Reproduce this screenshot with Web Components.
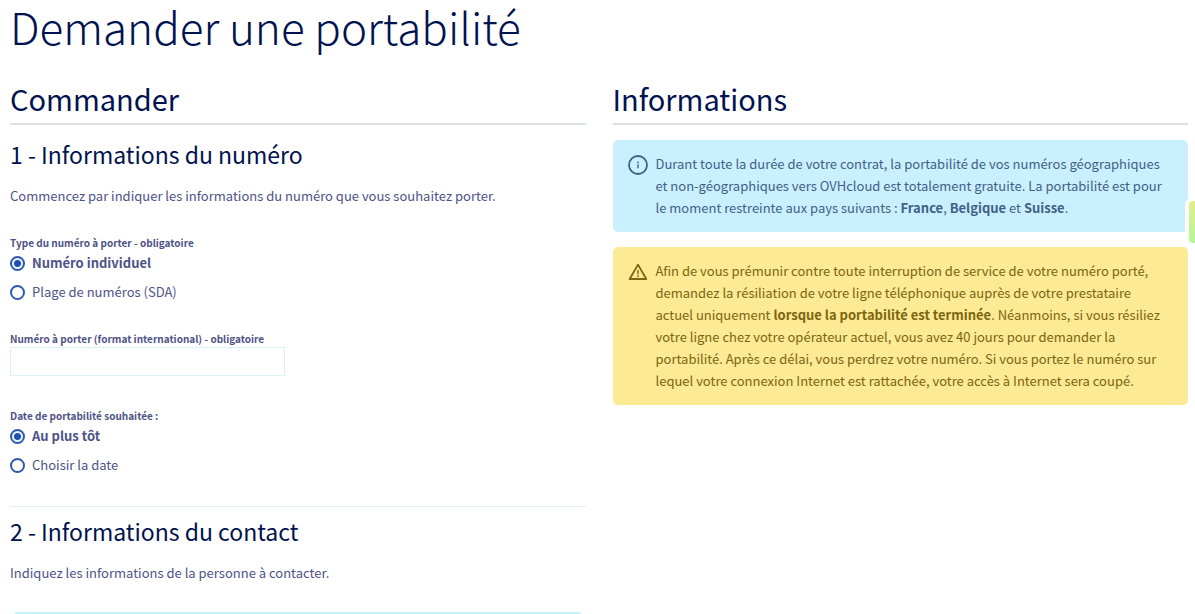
<!DOCTYPE html>
<html lang="fr">
<head>
<meta charset="utf-8">
<meta name="viewport" content="width=device-width, initial-scale=1">
<title>Demander une portabilité</title>
<style>
    body {
        --heading-color: #00124f;
        margin: 0;
        overflow: hidden;
        background: #fff;
        color: #4d5387;
        font-family: "Noto Sans CJK SC", "Noto Sans", sans-serif;
        font-size: 13px;
        line-height: 22px;
    }
</style>
</head>
<body>
<portability-page></portability-page>

<script>
class PageSection extends HTMLElement {

    constructor() {
        super();
        this.attachShadow({mode: "open"});
    }

    connectedCallback() {
        this.shadowRoot.innerHTML = `
        <style>
            :host {
                display: block;
                min-width: 0;
            }
            h2 {
                margin: 0 0 15px;
                padding-bottom: 7px;
                border-bottom: 2px solid #dcdfe0;
                color: var(--heading-color);
                font-size: 29px;
                font-weight: 400;
                line-height: 36px;
            }
        </style>
        <h2>${this.getAttribute("heading")}</h2>
        <slot></slot>
        `;
    }
}

class FormStep extends HTMLElement {

    constructor() {
        super();
        this.attachShadow({mode: "open"});
    }

    connectedCallback() {
        this.shadowRoot.innerHTML = `
        <style>
            :host {
                display: block;
            }
            h3 {
                margin: 0 0 17px;
                color: var(--heading-color);
                font-size: 23px;
                font-weight: 400;
                line-height: 28px;
            }
            p {
                margin: 0;
            }
        </style>
        <h3>${this.getAttribute("heading")}</h3>
        <p>${this.getAttribute("intro")}</p>
        <slot></slot>
        `;
    }
}

class RadioChoice extends HTMLElement {

    constructor() {
        super();
        this.attachShadow({mode: "open"});
    }

    /**
     * The options come from the "options" attribute, separated by "|".
     * The first one is selected.
     */
    connectedCallback() {
        const options = this.getAttribute("options").split("|");
        const name = this.getAttribute("name");
        this.shadowRoot.innerHTML = `
        <style>
            :host {
                display: block;
            }
            fieldset {
                margin: 0;
                padding: 0;
                border: 0;
            }
            legend {
                padding: 0;
                font-size: 10px;
                font-weight: 700;
                line-height: 16px;
            }
            .options {
                display: flex;
                flex-direction: column;
                gap: 7px;
                padding-top: 1px;
            }
            .option {
                display: flex;
                align-items: center;
                gap: 7px;
            }
            input {
                appearance: none;
                flex: none;
                width: 15px;
                height: 15px;
                margin: 0;
                border: 2px solid #3159b0;
                border-radius: 50%;
                background: #fff;
            }
            input:checked {
                background: radial-gradient(circle, #1f4fb5 0 3px, #e4f5ff 4px);
            }
            input:checked + label {
                font-weight: 700;
            }
        </style>
        <fieldset>
            <legend>${this.getAttribute("legend")}</legend>
            <div class="options">
                ${options.map((option, i) => `
                <div class="option">
                    <input type="radio" name="${name}" id="${name}${i}" ${i === 0 ? "checked" : ""}>
                    <label for="${name}${i}">${option}</label>
                </div>`).join("")}
            </div>
        </fieldset>
        `;
    }
}

class TextField extends HTMLElement {

    constructor() {
        super();
        this.attachShadow({mode: "open"});
    }

    connectedCallback() {
        this.shadowRoot.innerHTML = `
        <style>
            :host {
                display: flex;
                flex-direction: column;
                align-items: flex-start;
            }
            label {
                font-size: 10px;
                font-weight: 700;
                line-height: 16px;
            }
            input {
                box-sizing: border-box;
                width: 275px;
                max-width: 100%;
                height: 29px;
                padding: 0 8px;
                border: 1px solid #dcf1f6;
                background: #fff;
                color: inherit;
                font: inherit;
            }
        </style>
        <label for="field">${this.getAttribute("label")}</label>
        <input type="text" id="field">
        `;
    }
}

const icons = {
    info: `
        <circle cx="10" cy="10" r="9" fill="none" stroke="currentColor" stroke-width="1.8"/>
        <circle cx="10" cy="7.4" r="0.9" fill="currentColor"/>
        <path d="M10 9.2v4" fill="none" stroke="currentColor" stroke-width="1.4"/>`,
    warning: `
        <path d="M10 2.6 18.3 17H1.7Z" fill="none" stroke="currentColor" stroke-width="1.8" stroke-linejoin="round"/>
        <path d="M10 8v4.2" fill="none" stroke="currentColor" stroke-width="1.4"/>
        <circle cx="10" cy="14.2" r="0.9" fill="currentColor"/>`
};

class InfoMessage extends HTMLElement {

    constructor() {
        super();
        this.attachShadow({mode: "open"});
    }

    connectedCallback() {
        this.shadowRoot.innerHTML = `
        <style>
            :host {
                display: flex;
                align-items: flex-start;
                gap: 8px;
                padding: 13px 20px 13px 15px;
                border-radius: 5px;
                background: #caf0ff;
                color: #3f6186;
            }
            :host([type="warning"]) {
                background: #fcea94;
                color: #7d6511;
            }
            svg {
                flex: none;
                width: 20px;
                height: 20px;
                margin-top: 2px;
            }
            div {
                flex: 1;
                min-width: 0;
            }
        </style>
        <svg viewBox="0 0 20 20" aria-hidden="true">${icons[this.getAttribute("type")]}</svg>
        <div><slot></slot></div>
        `;
    }
}

class SideTab extends HTMLElement {

    constructor() {
        super();
        this.attachShadow({mode: "open"}).innerHTML = `
        <style>
            :host {
                position: fixed;
                top: 201px;
                right: 0;
                width: 6px;
                height: 42px;
                border-radius: 4px 0 0 4px;
                background: linear-gradient(#e2ee8c, #b4f59c);
                box-shadow: 0 0 0 4px #fff;
            }
        </style>
        `;
    }
}

class PortabilityPage extends HTMLElement {

    constructor() {
        super();
        this.attachShadow({mode: "open"});
    }

    connectedCallback() {
        this.shadowRoot.innerHTML = `
        <style>
            :host {
                display: block;
                padding: 0 7px 0 10px;
            }
            h1 {
                margin: 0 0 28px;
                color: var(--heading-color);
                font-size: 44px;
                font-weight: 300;
                line-height: 52px;
            }
            main {
                display: grid;
                grid-template-columns: 1fr 1fr;
                align-items: start;
                gap: 27px;
            }
            form-step + form-step {
                margin-top: 30px;
                padding-top: 10px;
                border-top: 1px solid #e8eef0;
            }
            radio-choice, text-field {
                margin-top: 28px;
            }
            text-field + radio-choice {
                margin-top: 32px;
            }
            info-message + info-message {
                margin-top: 15px;
            }
            strong {
                font-weight: 700;
            }
            .contact {
                margin: 28px 3px 0;
            }
        </style>
        <h1>Demander une portabilité</h1>
        <main>
            <page-section heading="Commander">
                <form-step heading="1 - Informations du numéro" intro="Commencez par indiquer les informations du numéro que vous souhaitez porter.">
                    <radio-choice name="type" legend="Type du numéro à porter - obligatoire" options="Numéro individuel|Plage de numéros (SDA)"></radio-choice>
                    <text-field label="Numéro à porter (format international) - obligatoire"></text-field>
                    <radio-choice name="date" legend="Date de portabilité souhaitée :" options="Au plus tôt|Choisir la date"></radio-choice>
                </form-step>
                <form-step heading="2 - Informations du contact" intro="Indiquez les informations de la personne à contacter.">
                    <info-message class="contact" type="info"></info-message>
                </form-step>
            </page-section>
            <page-section heading="Informations">
                <info-message type="info">Durant toute la durée de votre contrat, la portabilité de vos numéros géographiques et non-géographiques vers OVHcloud est totalement gratuite. La portabilité est pour le moment restreinte aux pays suivants : <strong>France</strong>, <strong>Belgique</strong> et <strong>Suisse</strong>.</info-message>
                <info-message type="warning">Afin de vous prémunir contre toute interruption de service de votre numéro porté, demandez la résiliation de votre ligne téléphonique auprès de votre prestataire actuel uniquement <strong>lorsque la portabilité est terminée</strong>. Néanmoins, si vous résiliez votre ligne chez votre opérateur actuel, vous avez 40 jours pour demander la portabilité. Après ce délai, vous perdrez votre numéro. Si vous portez le numéro sur lequel votre connexion Internet est rattachée, votre accès à Internet sera coupé.</info-message>
            </page-section>
        </main>
        <side-tab></side-tab>
        `;
    }
}

customElements.define("page-section", PageSection);
customElements.define("form-step", FormStep);
customElements.define("radio-choice", RadioChoice);
customElements.define("text-field", TextField);
customElements.define("info-message", InfoMessage);
customElements.define("side-tab", SideTab);
customElements.define("portability-page", PortabilityPage);
</script>
</body>
</html>
